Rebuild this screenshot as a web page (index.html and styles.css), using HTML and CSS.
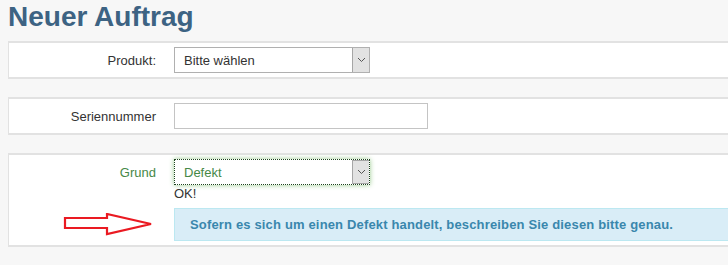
FILE: index.html
```html
<!DOCTYPE html>
<html lang="de">
<head>
    <meta charset="UTF-8">
    <meta name="viewport" content="width=device-width, initial-scale=1.0">
    <title>Neuer Auftrag</title>
    <link rel="stylesheet" href="styles.css">
</head>
<body>
    <h1 class="titel">Neuer Auftrag</h1>

    <div class="panel">
        <label class="label" for="produkt">Produkt:</label>
        <div class="select-box">
            <select id="produkt" class="select"><option>Bitte wählen</option></select>
            <span class="caret"><svg width="9" height="6" viewBox="0 0 9 6"><polyline points="1,1 4.5,4.5 8,1" fill="none" stroke="#555" stroke-width="1"/></svg></span>
        </div>
    </div>

    <div class="panel">
        <label class="label" for="seriennummer">Seriennummer</label>
        <input id="seriennummer" class="input" type="text">
    </div>

    <div class="panel">
        <label class="label ok" for="grund">Grund</label>
        <div class="select-box focus">
            <select id="grund" class="select ok"><option>Defekt</option></select>
            <span class="caret"><svg width="9" height="6" viewBox="0 0 9 6"><polyline points="1,1 4.5,4.5 8,1" fill="none" stroke="#555" stroke-width="1"/></svg></span>
        </div>
        <div class="hilfe">OK!</div>
        <div class="pfeil">
            <svg width="92" height="24" viewBox="0 0 92 24">
                <polygon points="2,5 44,5 44,1 88,11 44,21 44,15 2,15" fill="none" stroke="#ea1a22" stroke-width="2.2" stroke-linejoin="miter"/>
            </svg>
        </div>
        <div class="hinweis">Sofern es sich um einen Defekt handelt, beschreiben Sie diesen bitte genau.</div>
    </div>
</body>
</html>
```

FILE: styles.css
```css
body { margin: 0 0 0 8px; background: #f7f7f7; font-family: "Liberation Sans", Arial, sans-serif; font-size: 13px; color: #333; }

.titel { margin: 0 0 7px; font-size: 28px; line-height: 34px; font-weight: bold; color: #3d6383; }

/* panels run to the right edge of the window, no right border visible */
.panel { display: grid; grid-template-columns: 147px 1fr; column-gap: 18px; margin-bottom: 18px; padding: 4px 0; background: #fff; border: 0 solid #e2e2e2; border-width: 2px 0 2px 1px; }

.label { align-self: center; text-align: right; }
.ok { color: #468847; }

.select-box { display: flex; width: 196px; height: 26px; box-sizing: border-box; border: 1px solid #b0b0b0; background: #fff; }
.select { flex: 1; min-width: 0; margin: 0; padding: 0 0 0 9px; border: 0; background: transparent; font: 13px "Liberation Sans", Arial, sans-serif; color: #333; appearance: none; -webkit-appearance: none; outline: none; }
.select.ok { color: #468847; }
.caret { display: flex; align-items: center; justify-content: center; width: 16px; background: #e2e2e2; border-left: 1px solid #a6a6a6; }
.focus { border: 1px dotted #1d431e; box-shadow: 0 0 5px #9acb8f; }
.focus .caret { border: 1px solid #a6a6a6; border-right: 0; }

.input { width: 254px; height: 26px; box-sizing: border-box; margin: 0; border: 1px solid #c4c4c4; padding: 0 6px; font: 13px "Liberation Sans", Arial, sans-serif; }

.hilfe { grid-column: 2; line-height: 18px; }

.pfeil { display: flex; align-items: center; justify-content: flex-end; margin-top: 5px; margin-right: 1px; }
.hinweis { margin-top: 5px; padding: 8px 15px; line-height: 15px; font-weight: bold; letter-spacing: 0.16px; color: #3a87ad; background: #d9edf7; border: 1px solid #bce8f1; border-right: 0; }
```
